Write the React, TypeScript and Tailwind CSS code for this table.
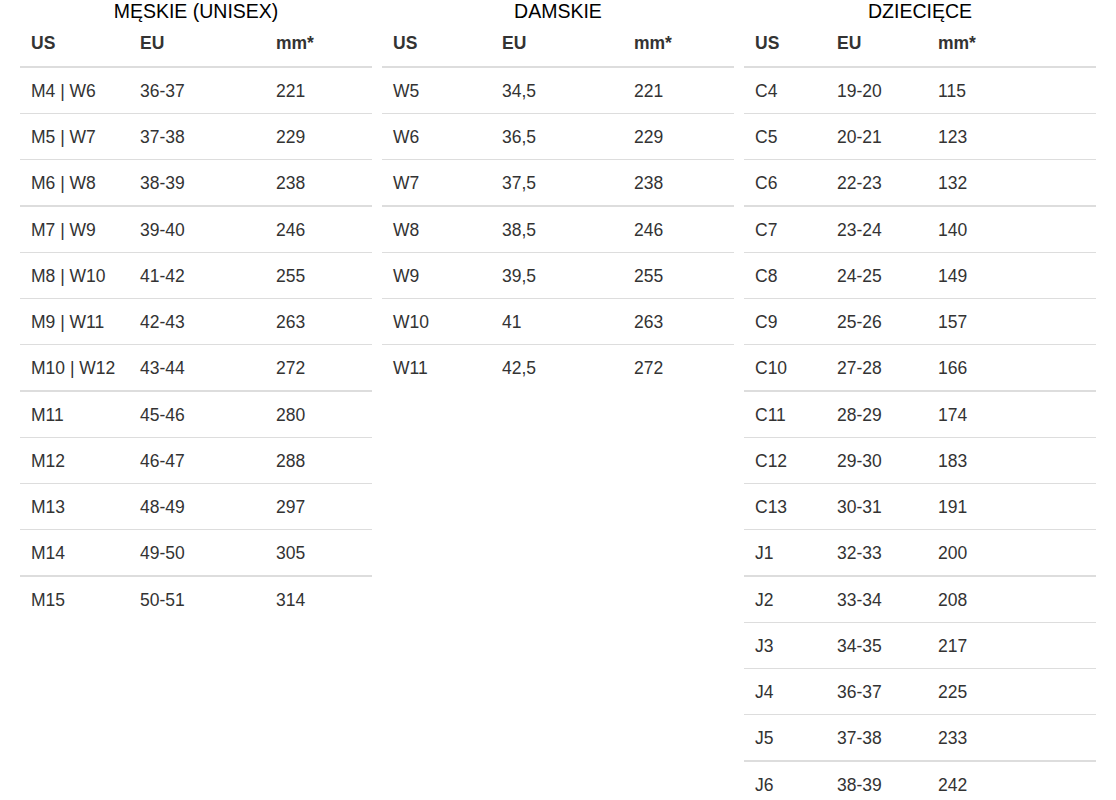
type Row = [string, string, string];

type SizeTable = {
  title: string;
  widths: string[];
  groups: Row[][];
};

const tables: SizeTable[] = [
  {
    title: "MĘSKIE (UNISEX)",
    widths: ["w-[109px]", "w-[136px]", "w-[107px]"],
    groups: [
      [
        ["M4 | W6", "36-37", "221"],
        ["M5 | W7", "37-38", "229"],
        ["M6 | W8", "38-39", "238"],
      ],
      [
        ["M7 | W9", "39-40", "246"],
        ["M8 | W10", "41-42", "255"],
        ["M9 | W11", "42-43", "263"],
        ["M10 | W12", "43-44", "272"],
      ],
      [
        ["M11", "45-46", "280"],
        ["M12", "46-47", "288"],
        ["M13", "48-49", "297"],
        ["M14", "49-50", "305"],
      ],
      [["M15", "50-51", "314"]],
    ],
  },
  {
    title: "DAMSKIE",
    widths: ["w-[109px]", "w-[132px]", "w-[111px]"],
    groups: [
      [
        ["W5", "34,5", "221"],
        ["W6", "36,5", "229"],
        ["W7", "37,5", "238"],
      ],
      [
        ["W8", "38,5", "246"],
        ["W9", "39,5", "255"],
        ["W10", "41", "263"],
        ["W11", "42,5", "272"],
      ],
    ],
  },
  {
    title: "DZIECIĘCE",
    widths: ["w-[82px]", "w-[101px]", "w-[169px]"],
    groups: [
      [
        ["C4", "19-20", "115"],
        ["C5", "20-21", "123"],
        ["C6", "22-23", "132"],
      ],
      [
        ["C7", "23-24", "140"],
        ["C8", "24-25", "149"],
        ["C9", "25-26", "157"],
        ["C10", "27-28", "166"],
      ],
      [
        ["C11", "28-29", "174"],
        ["C12", "29-30", "183"],
        ["C13", "30-31", "191"],
        ["J1", "32-33", "200"],
      ],
      [
        ["J2", "33-34", "208"],
        ["J3", "34-35", "217"],
        ["J4", "36-37", "225"],
        ["J5", "37-38", "233"],
      ],
      [["J6", "38-39", "242"]],
    ],
  },
];

const SizeChart = ({ table }: { table: SizeTable }) => {
  return (
    <div className="w-[352px] shrink-0">
      <div className="text-center text-[19.5px] leading-[22px] text-black">
        {table.title}
      </div>
      <table className="w-full table-fixed border-separate border-spacing-0 text-[17.5px] text-[#333]">
        <colgroup>
          {table.widths.map((w, i) => (
            <col key={i} className={w} />
          ))}
        </colgroup>
        <thead>
          <tr>
            {["US", "EU", "mm*"].map((h) => (
              <th
                key={h}
                className="border-b-2 border-[#ddd] pl-[11px] pt-[11px] pb-[12px] text-left font-bold leading-[21px]"
              >
                {h}
              </th>
            ))}
          </tr>
        </thead>
        {table.groups.map((group, gi) => (
          <tbody key={gi}>
            {group.map((row, ri) => {
              let border = "border-t border-[#ddd]";
              if (gi === 0 && ri === 0) border = "";
              else if (ri === 0) border = "border-t-2 border-[#ddd]";
              return (
                <tr key={ri}>
                  {row.map((cell, ci) => (
                    <td
                      key={ci}
                      className={`${border} whitespace-nowrap pl-[11px] pt-[13px] pb-[11px] leading-[21px]`}
                    >
                      {cell}
                    </td>
                  ))}
                </tr>
              );
            })}
          </tbody>
        ))}
      </table>
    </div>
  );
}

export default function App() {
  return (
    <div className="min-h-[800px] bg-white font-['Liberation_Sans',Arial,sans-serif]">
      <div className="flex items-start gap-[10px] px-[20px]">
        {tables.map((t) => (
          <SizeChart key={t.title} table={t} />
        ))}
      </div>
    </div>
  );
}
